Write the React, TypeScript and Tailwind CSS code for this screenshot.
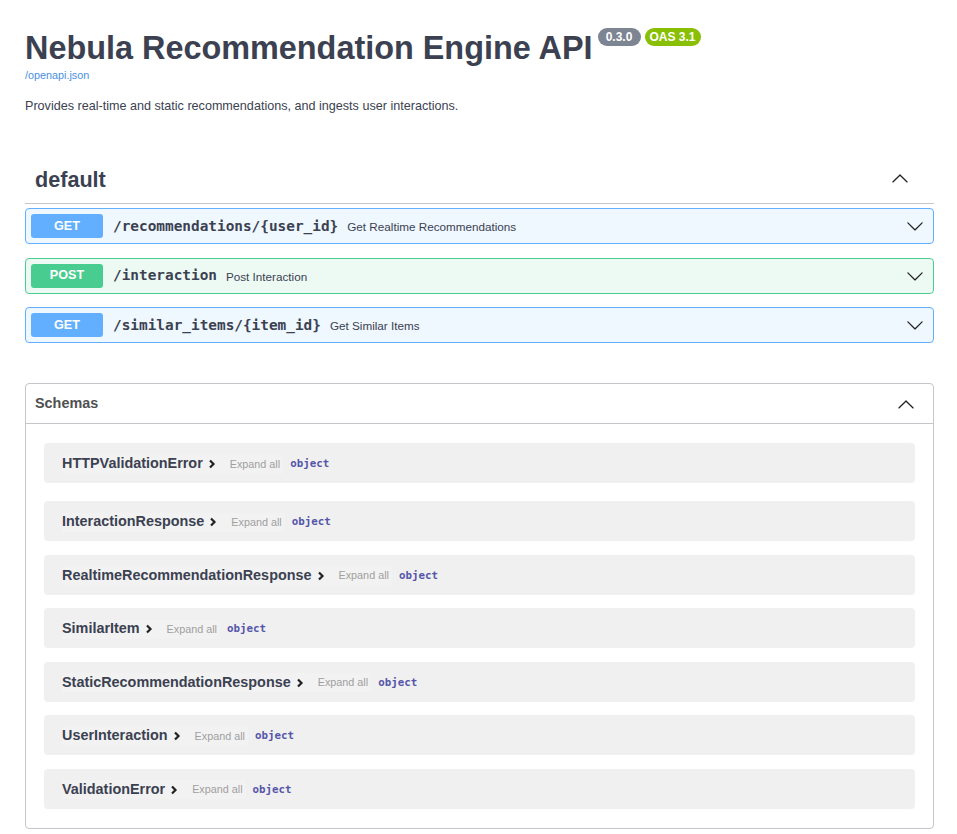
import React from "react";

const sans = { fontFamily: '"Liberation Sans", Arial, sans-serif' };
const mono = { fontFamily: '"DejaVu Sans Mono", monospace' };

const ops = [
  { method: "GET", path: "/recommendations/{user_id}", summary: "Get Realtime Recommendations" },
  { method: "POST", path: "/interaction", summary: "Post Interaction" },
  { method: "GET", path: "/similar_items/{item_id}", summary: "Get Similar Items" },
];

const schemas = [
  "HTTPValidationError",
  "InteractionResponse",
  "RealtimeRecommendationResponse",
  "SimilarItem",
  "StaticRecommendationResponse",
  "UserInteraction",
  "ValidationError",
];

function ArrowDown({ className = "" }: { className?: string }) {
  return (
    <svg viewBox="0 0 20 20" className={className} fill="currentColor">
      <path d="M17.418 6.109c.272-.268.709-.268.979 0s.271.701 0 .969l-7.908 7.83c-.27.268-.707.268-.979 0l-7.908-7.83c-.27-.268-.27-.701 0-.969.271-.268.709-.268.979 0L10 13.25l7.418-7.141z" />
    </svg>
  );
}

function ArrowUp({ className = "" }: { className?: string }) {
  return (
    <svg viewBox="0 0 20 20" className={className} fill="currentColor">
      <path d="M17.418 14.908c.272.268.709.268.979 0s.271-.701 0-.969l-7.908-7.83c-.27-.268-.707-.268-.979 0l-7.908 7.83c-.27.268-.27.701 0 .969.271.268.709.268.979 0L10 7.767l7.418 7.141z" />
    </svg>
  );
}

function Chevron() {
  return (
    <svg viewBox="0 0 8 10" className="w-[8px] h-[10px] text-[#222]" fill="none" stroke="currentColor" strokeWidth="2.2">
      <path d="M2 1.5 L5.5 5 L2 8.5" />
    </svg>
  );
}

function OpBlock({ method, path, summary }: { method: string; path: string; summary: string }) {
  const isPost = method === "POST";
  return (
    <div
      className={`flex items-center h-[36px] rounded-[4px] border px-[5px] ${
        isPost ? "border-[#49cc90] bg-[#edfaf4]" : "border-[#61affe] bg-[#eff7ff]"
      }`}
    >
      <div
        className={`w-[72px] h-[24px] rounded-[3px] flex items-center justify-center text-white text-[12.6px] font-bold ${
          isPost ? "bg-[#49cc90]" : "bg-[#61affe]"
        }`}
      >
        {method}
      </div>
      <span className="ml-[10px] mt-[1px] text-[14.4px] font-bold text-[#3b4151]" style={mono}>
        {path}
      </span>
      <span className="ml-[9px] mt-[2px] text-[11.7px] text-[#3b4151]">{summary}</span>
      <div className="flex-1" />
      <ArrowDown className="w-[18px] h-[18px] text-[#222] mr-[4px]" />
    </div>
  );
}

export default function App() {
  return (
    <div className="bg-white min-h-[834px] pl-[25px] pr-[23px]" style={sans}>
      {/* info */}
      <div className="pt-[28px]">
        <div className="flex items-start">
          <h2 className="text-[32.4px] font-bold text-[#3b4151] leading-[40px]">
            Nebula Recommendation Engine API
          </h2>
          <span className="ml-[5px] mt-0 w-[43px] h-[18px] rounded-full bg-[#7d8492] text-white text-[12px] font-bold leading-[18px] text-center">
            0.3.0
          </span>
          <span className="ml-[4px] mt-0 w-[56px] h-[18px] rounded-full bg-[#89bf04] text-white text-[12px] font-bold leading-[18px] text-center">
            OAS 3.1
          </span>
        </div>
        <a className="block mt-[1px] text-[10.8px] text-[#4990e2] leading-[13px]">/openapi.json</a>
        <p className="mt-[17px] text-[12.6px] text-[#3b4151] leading-[15px]">
          Provides real-time and static recommendations, and ingests user interactions.
        </p>
      </div>

      {/* default tag */}
      <div className="mt-[43px]">
        <div className="flex items-center h-[47px] border-b border-[#c4c6cb] pl-[10px] pr-[25px]">
          <h3 className="text-[21.6px] font-bold text-[#3b4151]">default</h3>
          <div className="flex-1" />
          <ArrowUp className="w-[18px] h-[18px] text-[#222] mb-[4px]" />
        </div>
        <div className="mt-[4px] flex flex-col gap-[13.5px]">
          {ops.map((op) => (
            <OpBlock key={op.path} {...op} />
          ))}
        </div>
      </div>

      {/* schemas */}
      <div className="mt-[40px] border border-[#c4c6cb] rounded-[4px]">
        <div className="flex items-center h-[40px] border-b border-[#c4c6cb] pl-[9px] pr-[18px]">
          <h4 className="text-[14.4px] font-bold text-[#505050]">Schemas</h4>
          <div className="flex-1" />
          <ArrowUp className="w-[18px] h-[18px] text-[#222]" />
        </div>
        <div className="px-[18px] pt-[19px] pb-[19px] flex flex-col">
          {schemas.map((name, i) => (
            <div
              key={name}
              className={`flex items-center h-[40px] rounded-[4px] bg-[#f0f0f0] pl-[18px] pt-[2px] ${
                i === 0 ? "mb-[18px]" : i < schemas.length - 1 ? "mb-[13.5px]" : ""
              }`}
            >
              <span className="flex items-center h-[19px] bg-[#f2f2f2] pr-[11px]">
                <span className="text-[14.4px] font-bold text-[#3b4151]">{name}</span>
                <span className="ml-[5px] flex items-center">
                  <Chevron />
                </span>
              </span>
              <span className="flex items-center h-[19px] bg-[#f2f2f2] px-[3px] text-[10.8px] text-[#a0a0a0]">
                Expand all
              </span>
              <span className="ml-[7px] mt-[1px] text-[10.8px] font-bold text-[#55a]" style={mono}>
                object
              </span>
            </div>
          ))}
        </div>
      </div>
    </div>
  );
}
